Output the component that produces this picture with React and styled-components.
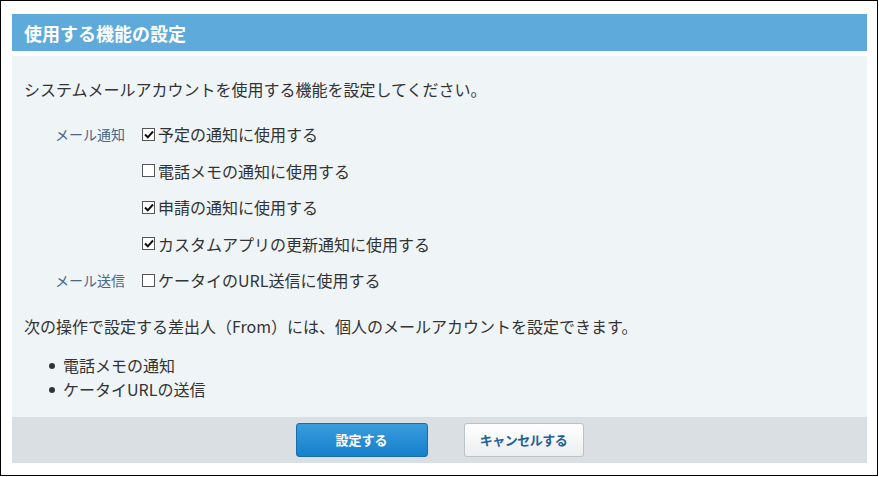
import React from "react";
import styled, { createGlobalStyle } from "styled-components";

const Global = createGlobalStyle`
  html, body { margin: 0; padding: 0; background: #fff; }
  body { font-family: "Noto Sans CJK JP", "Noto Sans", sans-serif; color: #333; }
`;

const Frame = styled.div`
  box-sizing: border-box;
  width: 878px;
  height: 476px;
  border: 1px solid #000;
  padding: 13px 10px 0 11px;
  display: flex;
  flex-direction: column;
`;

const Header = styled.div`
  height: 37px;
  background: #5daadb;
  display: flex;
  align-items: center;
  padding-left: 12px;
  color: #fff;
  font-weight: bold;
  font-size: 18px;
  margin-bottom: 5px;
`;

const Body = styled.div`
  background: #eff4f7;
  padding: 21px 12px 16px 12px;
  font-size: 16px;
  color: #333;
`;

const Line = styled.p`
  margin: 0;
  line-height: 24px;
  margin-bottom: ${(p) => p.$mb || 0}px;
`;

const SettingGrid = styled.div`
  display: grid;
  grid-template-columns: 101px auto;
  column-gap: 17px;
  grid-auto-rows: 36.5px;
  align-items: center;
  margin-bottom: 15px;
`;

const Label = styled.div`
  text-align: right;
  font-size: 14px;
  color: #4a6688;
  grid-column: 1;
`;

const Option = styled.label`
  grid-column: 2;
  display: flex;
  align-items: center;
  font-size: 16px;
  color: #333;
`;

const Box = styled.span`
  box-sizing: border-box;
  width: 13px;
  height: 13px;
  border: 1px solid #555;
  background: #fff;
  margin-right: 3px;
  display: inline-flex;
  align-items: center;
  justify-content: center;
`;

const List = styled.ul`
  margin: 0;
  padding: 0 0 0 39px;
  line-height: 24px;
  font-size: 16px;
  list-style: none;
`;

const Item = styled.li`
  position: relative;
  &::before {
    content: "";
    position: absolute;
    left: -14px;
    top: 10px;
    width: 6px;
    height: 6px;
    border-radius: 50%;
    background: #333;
  }
`;

const Footer = styled.div`
  background: #dadfe3;
  height: 46px;
  display: flex;
  align-items: center;
  justify-content: center;
  gap: 36px;
`;

const Button = styled.button`
  box-sizing: border-box;
  height: 34px;
  width: ${(p) => (p.$primary ? 132 : 120)}px;
  border-radius: 3px;
  font-family: "Noto Sans CJK JP", sans-serif;
  font-weight: bold;
  font-size: 13px;
  letter-spacing: ${(p) => (p.$primary ? 0 : -0.5)}px;
  cursor: pointer;
  border: 1px solid ${(p) => (p.$primary ? "#1b6cab" : "#b9c2c8")};
  color: ${(p) => (p.$primary ? "#fff" : "#1f5f9c")};
  background: ${(p) =>
    p.$primary
      ? "linear-gradient(#3a9ddd, #1580cb)"
      : "linear-gradient(#ffffff, #eceeef)"};
`;

function Check({ checked }) {
  return (
    <Box>
      {checked && (
        <svg width="10" height="9" viewBox="0 0 10 9">
          <path d="M1 4.5 L3.8 7.3 L9 1.5" stroke="#111" strokeWidth="2" fill="none" />
        </svg>
      )}
    </Box>
  );
}

const rows = [
  { label: "メール通知", text: "予定の通知に使用する", checked: true },
  { label: "", text: "電話メモの通知に使用する", checked: false },
  { label: "", text: "申請の通知に使用する", checked: true },
  { label: "", text: "カスタムアプリの更新通知に使用する", checked: true },
  { label: "メール送信", text: "ケータイのURL送信に使用する", checked: false },
];

export default function App() {
  return (
    <>
      <Global />
      <Frame>
        <Header>使用する機能の設定</Header>
        <Body>
          <Line $mb={15}>システムメールアカウントを使用する機能を設定してください。</Line>
          <SettingGrid>
            {rows.map((r, i) => (
              <React.Fragment key={i}>
                <Label>{r.label}</Label>
                <Option>
                  <Check checked={r.checked} />
                  {r.text}
                </Option>
              </React.Fragment>
            ))}
          </SettingGrid>
          <Line $mb={15}>次の操作で設定する差出人（From）には、個人のメールアカウントを設定できます。</Line>
          <List>
            <Item>電話メモの通知</Item>
            <Item>ケータイURLの送信</Item>
          </List>
        </Body>
        <Footer>
          <Button $primary>設定する</Button>
          <Button>キャンセルする</Button>
        </Footer>
      </Frame>
    </>
  );
}
